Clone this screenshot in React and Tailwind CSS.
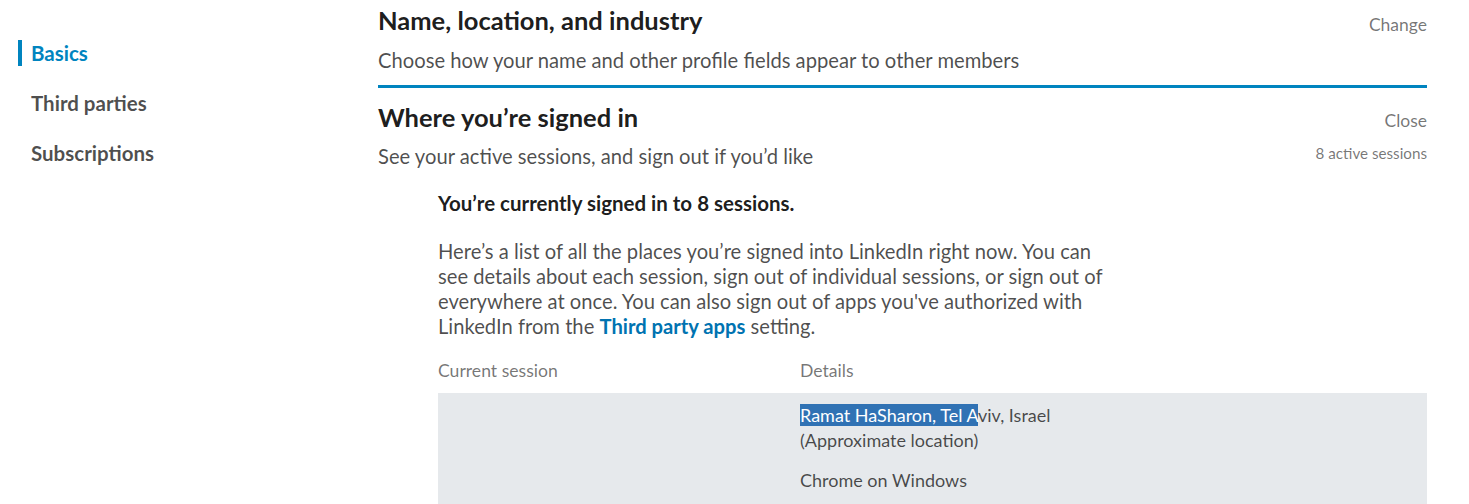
export default function App() {
  const font = { fontFamily: "Lato, 'Open Sans', sans-serif" };

  return (
    <div className="flex w-[1469px] h-[504px] overflow-hidden bg-white" style={font}>
      {/* Sidebar */}
      <div className="w-[378px] shrink-0 pt-[40px]">
        <ul className="flex flex-col gap-[24px]">
          <li className="flex items-center h-[26px] border-l-[4px] border-[#0084bf] ml-[18px] pl-[9px] text-[20.5px] font-bold text-[#0084bf]">
            Basics
          </li>
          <li className="flex items-center h-[26px] pl-[31px] text-[20.5px] font-bold text-[rgba(0,0,0,0.7)]">
            Third parties
          </li>
          <li className="flex items-center h-[26px] pl-[31px] text-[20.5px] font-bold text-[rgba(0,0,0,0.7)]">
            Subscriptions
          </li>
        </ul>
      </div>

      {/* Main */}
      <div className="w-[1049px] shrink-0">
        {/* Name, location, and industry */}
        <div className="border-b-[3px] border-[#0084bf] pb-[5px]">
          <div className="flex justify-between items-end h-[40px]">
            <h2 className="text-[25.5px] leading-[40px] font-bold text-[rgba(0,0,0,0.9)]">
              Name, location, and industry
            </h2>
            <button className="text-[17.5px] leading-[30px] text-[rgba(0,0,0,0.55)]">Change</button>
          </div>
          <p className="text-[20.2px] leading-[40px] text-[rgba(0,0,0,0.7)]">
            Choose how your name and other profile fields appear to other members
          </p>
        </div>

        {/* Where you're signed in */}
        <div className="pt-[9px]">
          <div className="flex justify-between items-end h-[40px]">
            <h2 className="text-[25.5px] leading-[40px] font-bold text-[rgba(0,0,0,0.9)]">
              Where you’re signed in
            </h2>
            <button className="text-[17.5px] leading-[32px] text-[rgba(0,0,0,0.55)]">Close</button>
          </div>
          <div className="flex justify-between items-start">
            <p className="text-[20.2px] leading-[38px] text-[rgba(0,0,0,0.7)]">
              See your active sessions, and sign out if you’d like
            </p>
            <span className="text-[15.2px] leading-[32px] text-[rgba(0,0,0,0.55)]">8 active sessions</span>
          </div>

          <div className="pl-[60px] pt-[14px]">
            <p className="text-[20.5px] leading-[28px] font-bold text-[rgba(0,0,0,0.9)]">
              You’re currently signed in to 8 sessions.
            </p>
            <p className="mt-[22px] max-w-[680px] text-[20.2px] leading-[25px] text-[rgba(0,0,0,0.7)]">
              Here’s a list of all the places you’re signed into LinkedIn right now. You can see
              details about each session, sign out of individual sessions, or sign out of
              everywhere at once. You can also sign out of apps you've authorized with LinkedIn
              from the <a className="font-bold text-[#0073b1]">Third party apps</a> setting.
            </p>

            <div className="mt-[17px]">
              <div className="flex text-[17.6px] leading-[30px] text-[rgba(0,0,0,0.55)] pb-[7px]">
                <div className="w-[362px]">Current session</div>
                <div>Details</div>
              </div>
              <div className="flex bg-[#e6e9ec] pt-[10px] pb-[20px] text-[18px] leading-[25px] text-[rgba(0,0,0,0.7)]">
                <div className="w-[362px]"></div>
                <div>
                  <p>
                    <span className="bg-[#3072b4] text-white">Ramat HaSharon, Tel A</span>viv, Israel
                  </p>
                  <p>(Approximate location)</p>
                  <p className="mt-[15px]">Chrome on Windows</p>
                </div>
              </div>
            </div>
          </div>
        </div>
      </div>
    </div>
  );
}
